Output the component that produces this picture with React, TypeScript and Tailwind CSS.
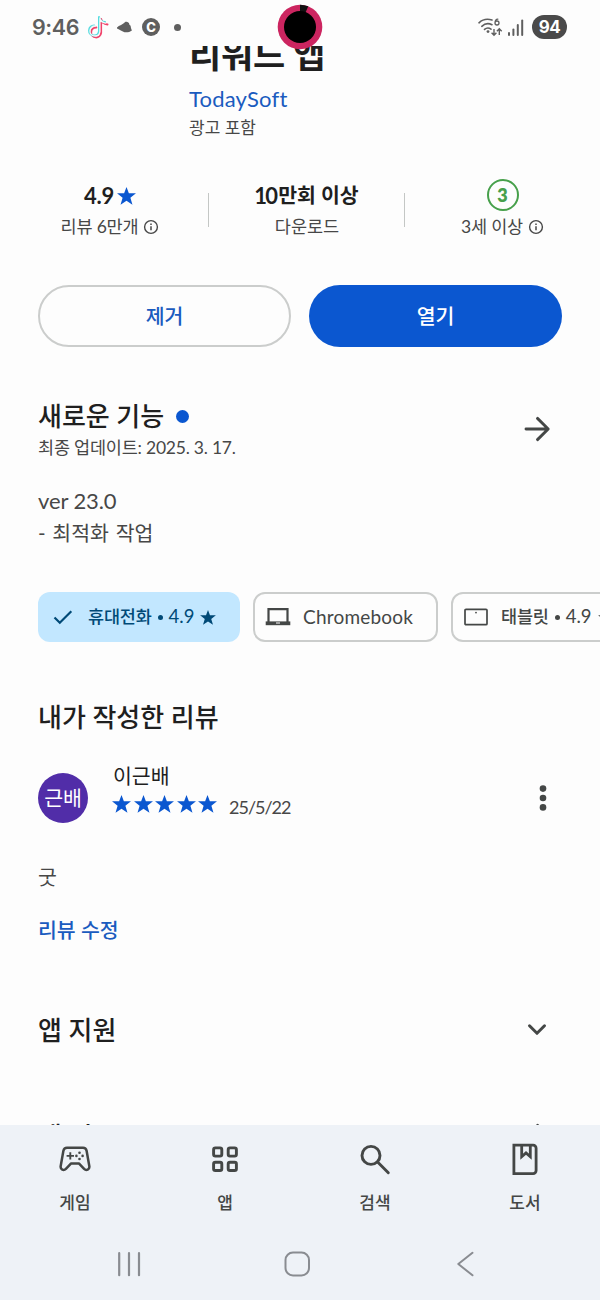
import type { ReactNode } from "react";

type IconProps = { className?: string };

function Star({ className }: IconProps) {
  return (
    <svg viewBox="0 0 20 19" className={className} fill="currentColor">
      <path d="M10 0l2.5 6.6H20l-5.900 4.700 2.200 7.400-6.300-4.200L3.700 18.700l2.200-7.400L0 6.600h7.500z" />
    </svg>
  );
}

function Info() {
  return (
    <svg viewBox="0 0 16 16" className="h-4 w-4 shrink-0" fill="none" stroke="#474747">
      <circle cx="8" cy="8" r="6.4" strokeWidth="1.4" />
      <path d="M8 7.2v4M8 4.5v1.4" strokeWidth="1.5" />
    </svg>
  );
}

function Bullet() {
  return <span className="mr-[6px] ml-[6px] h-[5px] w-[5px] shrink-0 rounded-full bg-current" />;
}

function Arrow() {
  return (
    <svg
      viewBox="0 0 28 28"
      className="h-7 w-7"
      fill="none"
      stroke="#444746"
      strokeWidth="2.9"
      strokeLinecap="round"
      strokeLinejoin="round"
    >
      <path d="M3 14h22M14.5 3.4L25.2 14 14.5 24.6" />
    </svg>
  );
}

function Chevron() {
  return (
    <svg
      viewBox="0 0 28 28"
      className="h-7 w-7"
      fill="none"
      stroke="#444746"
      strokeWidth="3"
      strokeLinecap="round"
      strokeLinejoin="round"
    >
      <path d="M6.5 9.8l7.5 7.5 7.5-7.5" />
    </svg>
  );
}

function StatusBar() {
  return (
    <header className="relative flex h-[46px] shrink-0 items-center justify-between pt-2 pr-[33px] pl-8 text-[#5f5f5f]">
      <div className="flex items-center">
        <span className="w-[48px] font-['Inter',sans-serif] text-[21.5px] leading-7 font-semibold tracking-[-0.4px] whitespace-nowrap">
          9:46
        </span>
        <svg viewBox="0 0 22 24" className="ml-[7px] h-6 w-[22px]" fill="none" strokeLinecap="round">
          <g strokeWidth="2">
            <path
              d="M13.4 3v14a5 5 0 1 1-4.8-5.6M13.4 3c.6 3 3 5 6.4 5.4"
              stroke="#f0436b"
              transform="translate(.7 1)"
            />
            <path
              d="M12.4 2.5v14a5 5 0 1 1-4.8-5.6M12.4 2.5c.6 3 3 4.6 6 5"
              stroke="#55dce0"
              transform="translate(-.4 -.4)"
            />
            <path
              d="M12.9 3v13.6a5 5 0 1 1-4.8-5.6M12.9 3.5c.8 2.6 3 4.2 6 4.6"
              stroke="#f7f7f7"
              strokeWidth="1.3"
            />
          </g>
        </svg>
        <svg viewBox="0 0 18 14" className="ml-[7px] h-3.5 w-[18px]" fill="#5f5f5f">
          <path d="M1 7.6C3 5.4 7 4.6 9.500 1.800c1.300 0 2.600.4 3.600 1.400 0 1.500.7 1.800 1.500 2.600.2 2 .6 3.200 1.300 4.600-2 1.600-5 2.300-7.400 1.800C5.500 11 3 9.400 1 8.600z" />
        </svg>
        <span className="ml-[8px] flex h-[18px] w-[18px] items-center justify-center rounded-full bg-[#5f5f5f] font-['Inter',sans-serif] text-[13px] leading-none font-extrabold text-white">
          C
        </span>
        <span className="ml-[14px] h-[7px] w-[7px] rounded-full bg-[#5f5f5f]" />
      </div>

      <div className="flex items-center">
        <svg viewBox="0 0 25 20" className="h-5 w-[25px]" fill="none" stroke="#5f5f5f">
          <g strokeWidth="1.6" strokeLinecap="round">
            <path d="M1 5.8C5 2 9.5 1.6 14 3" />
            <path d="M3.8 9.3C7 6.3 10.5 6 14 7.7" />
            <path d="M6.5 12.4c2-1.7 4.5-1.7 6.5-.2" />
          </g>
          <circle cx="10" cy="14.6" r="1.4" fill="#5f5f5f" stroke="none" />
          <path d="M20.3 2.3c-2-.5-3.3 1-3.3 3.4M21 6a2 2 0 1 1-4 0 2 2 0 0 1 4 0z" strokeWidth="1.3" />
          <path
            d="M16 12v6M13.6 15.8L16 18.2l2.4-2.4M21.3 18v-6M18.9 14.2l2.4-2.4 2.4 2.4"
            strokeWidth="1.4"
          />
        </svg>
        <svg viewBox="0 0 16 17" className="ml-[5px] h-[17px] w-4" fill="#5f5f5f">
          <rect x="0" y="13" width="2" height="4" rx="1" />
          <rect x="4.4" y="9.5" width="2" height="7.5" rx="1" />
          <rect x="8.8" y="5" width="2" height="12" rx="1" />
          <rect x="13.2" y="0.5" width="2" height="16.5" rx="1" />
        </svg>
        <span className="ml-[8px] flex h-6 w-[35px] items-center justify-center rounded-full bg-[#4a4a4a] font-['Inter',sans-serif] text-[17px] leading-none font-bold tracking-[-0.6px] text-white">
          94
        </span>
      </div>

      {/* camera cutout with charge ring */}
      <svg viewBox="0 0 46 46" className="absolute top-[4px] left-[277px] z-10 h-[46px] w-[46px]">
        <circle cx="23" cy="23" r="22.3" fill="#cc2560" />
        <path d="M23 .7a22.3 22.3 0 0 1 8.3 1.6L27 12h-4z" fill="#111" />
        <circle cx="23" cy="23" r="16" fill="#000" />
      </svg>
    </header>
  );
}

function Stats() {
  return (
    <section className="relative mt-[39px] mr-[-38px] ml-[-26px] grid grid-cols-3 text-[#474747]">
      <div className="flex flex-col items-center gap-1">
        <div className="flex h-8 items-center gap-[3px] text-[22px] font-bold tracking-[-0.2px] text-[#1f1f1f]">
          4.9
          <Star className="mt-[2px] h-[18px] w-[19px] text-[#0b57d0]" />
        </div>
        <div className="flex items-center gap-[5px] text-[17.5px] leading-6 tracking-[-0.2px]">
          리뷰 6만개
          <Info />
        </div>
      </div>
      <div className="flex flex-col items-center gap-1 pl-px">
        <div className="flex h-8 items-center text-[20.5px] font-bold text-[#1f1f1f]">
          <span className="text-[22px] tracking-[-1.8px]">10</span>
          <span className="ml-[2px]">만회 이상</span>
        </div>
        <div className="pl-px text-[17.5px] leading-6">다운로드</div>
      </div>
      <div className="flex flex-col items-center gap-1 pl-px">
        <div className="flex h-8 w-8 items-center justify-center rounded-full border-2 border-[#47a04b] text-[18px] font-extrabold text-[#47a04b]">
          3
        </div>
        <div className="flex items-center gap-[5px] text-[17.5px] leading-6 tracking-[-0.2px]">
          3세 이상
          <Info />
        </div>
      </div>
      <span className="absolute top-[14px] left-[196px] h-[34px] w-px bg-[#c4c7c5]" />
      <span className="absolute top-[14px] left-[392px] h-[34px] w-px bg-[#c4c7c5]" />
    </section>
  );
}

function DeviceChips() {
  return (
    <section className="mt-[43px] mr-[-38px] flex h-[50px] gap-[13px] overflow-hidden text-[17.5px] whitespace-nowrap text-[#444746]">
      <div className="flex w-[202px] shrink-0 items-center rounded-[12px] bg-[#c2e7ff] pl-[15px] font-medium text-[#004a77]">
        <svg viewBox="0 0 20 16" className="h-4 w-5" fill="none" stroke="currentColor" strokeWidth="2.2">
          <path d="M1.5 8.5l5.3 5.3L18.3 2.3" />
        </svg>
        <span className="ml-[15px] tracking-[-0.2px]">휴대전화</span>
        <Bullet />
        <span className="text-[18.5px] font-normal">4.9</span>
        <Star className="ml-[6px] h-[15px] w-4" />
      </div>
      <div className="flex w-[185px] shrink-0 items-center rounded-[12px] border-2 border-[#cbcdcc] pl-[10px]">
        <svg viewBox="0 0 26 20" className="h-5 w-[26px]" fill="none" stroke="#444746">
          <path d="M3.500 15V2.200h19V15" strokeWidth="2.200" />
          <path d="M.7 14.400h24.600v3.800H.7z" fill="#444746" stroke="none" />
          <path d="M11 16h4" stroke="#fff" strokeWidth="1" />
        </svg>
        <span className="ml-[12px] text-[19px] tracking-[0.2px]">Chromebook</span>
      </div>
      <div className="flex w-[204px] shrink-0 items-center rounded-[12px] border-2 border-[#cbcdcc] pl-[10px]">
        <svg viewBox="0 0 26 20" className="h-5 w-[26px]" fill="none" stroke="#444746">
          <rect x="2" y="2.3" width="22" height="15.4" rx="1" strokeWidth="1.7" />
          <circle cx="13" cy="5.6" r=".9" fill="#444746" stroke="none" />
        </svg>
        <span className="ml-[12px] font-medium tracking-[-0.2px]">태블릿</span>
        <Bullet />
        <span className="text-[18.5px]">4.9</span>
        <Star className="ml-[6px] h-[15px] w-4" />
      </div>
    </section>
  );
}

function MyReview() {
  return (
    <section className="mt-[57px]">
      <h2 className="text-[26px] leading-9 font-medium text-[#1f1f1f]">내가 작성한 리뷰</h2>
      <div className="mt-[27px] flex h-[72px] items-center">
        <div className="flex h-[50px] w-[50px] items-center justify-center rounded-full bg-[#512da8] text-[20.5px] text-white">
          근배
        </div>
        <div className="ml-[24px] h-full flex-1">
          <div className="pl-px text-[20.5px] leading-7 text-[#1f1f1f]">이근배</div>
          <div className="mt-[2px] flex h-6 items-center text-[#0b57d0]">
            <div className="flex gap-[2.5px]">
              {[1, 2, 3, 4, 5].map((n) => (
                <Star key={n} className="h-[18px] w-[19px]" />
              ))}
            </div>
            <span className="mt-[7px] ml-[12px] text-[18px] tracking-[-1px] text-[#474747]">25/5/22</span>
          </div>
        </div>
        <svg viewBox="0 0 8 28" className="mr-[15px] h-7 w-2" fill="#444746">
          <circle cx="4" cy="4.6" r="3.3" />
          <circle cx="4" cy="14" r="3.3" />
          <circle cx="4" cy="23.4" r="3.3" />
        </svg>
      </div>
      <p className="mt-[28px] text-[20.5px] leading-[30px] text-[#474747]">굿</p>
      <div className="mt-[24px] text-[20.5px] leading-7 font-medium text-[#1a5bbf]">리뷰 수정</div>
    </section>
  );
}

function SectionRow({ title, icon, className }: { title: string; icon: ReactNode; className?: string }) {
  return (
    <div className={`flex items-center justify-between pr-[11px] ${className ?? ""}`}>
      <h2 className="text-[26px] leading-9 font-medium text-[#1f1f1f]">{title}</h2>
      {icon}
    </div>
  );
}

const tabs = [
  {
    label: "게임",
    icon: (
      <>
        <path
          d="M8 4.800h16c1.900 0 3.200 1.100 3.600 2.900l2.700 15.300c.6 3.600-3 5-5.200 2.900l-5-5.300h-8.200l-5 5.300c-2.200 2.100-5.800.7-5.200-2.900L4.400 7.700C4.800 5.900 6.100 4.800 8 4.800z"
          strokeWidth="2.5"
          strokeLinejoin="round"
        />
        <path d="M11.3 9.2v7.4M7.6 12.9H15" strokeWidth="1.9" />
        <g fill="#444746" stroke="none">
          <circle cx="20.5" cy="9.8" r="1.3" />
          <circle cx="20.5" cy="16" r="1.3" />
          <circle cx="17.4" cy="12.9" r="1.3" />
          <circle cx="23.6" cy="12.9" r="1.3" />
        </g>
      </>
    ),
  },
  {
    label: "앱",
    icon: (
      <g strokeWidth="2.9">
        <rect x="4.6" y="4.9" width="8.2" height="8.2" rx="1.8" />
        <rect x="19.2" y="4.9" width="8.2" height="8.2" rx="1.8" />
        <rect x="4.6" y="19.3" width="8.2" height="8.2" rx="1.8" />
        <rect x="19.2" y="19.3" width="8.2" height="8.2" rx="1.8" />
      </g>
    ),
  },
  {
    label: "검색",
    icon: (
      <g strokeWidth="2.9" strokeLinecap="round">
        <circle cx="12" cy="12.4" r="9" />
        <path d="M18.6 19L29.3 29.7" />
      </g>
    ),
  },
  {
    label: "도서",
    icon: (
      <>
        <path d="M4.900 2.200h19.200a3 3 0 0 1 3 3v22.400a3 3 0 0 1-3 3H4.900z" strokeWidth="2.800" />
        <path d="M12.700 2v11.700l4.300-3.800 4.300 3.800V2" strokeWidth="2.800" />
      </>
    ),
  },
];

function BottomNav() {
  return (
    <footer className="h-[175px] shrink-0 bg-[#eef2f7] pt-[18px]">
      <nav className="grid grid-cols-4">
        {tabs.map((tab) => (
          <div key={tab.label} className="flex flex-col items-center">
            <svg viewBox="0 0 32 32" className="h-8 w-8" fill="none" stroke="#444746">
              {tab.icon}
            </svg>
            <span className="mt-4 text-[17px] leading-6 font-medium text-[#444746]">{tab.label}</span>
          </div>
        ))}
      </nav>
      <div className="mt-[33px] ml-[45px] grid w-[504px] grid-cols-3 justify-items-center">
        <svg viewBox="0 0 32 32" className="h-8 w-8" stroke="#898c91" strokeWidth="2.2" strokeLinecap="round">
          <path d="M6.2 5.2v22M16 5.2v22M26 5.2v22" />
        </svg>
        <svg viewBox="0 0 32 32" className="h-8 w-8" fill="none" stroke="#898c91" strokeWidth="2">
          <rect x="4.5" y="4.5" width="23.5" height="23" rx="7.5" />
        </svg>
        <svg
          viewBox="0 0 32 32"
          className="h-8 w-8"
          fill="none"
          stroke="#898c91"
          strokeWidth="2"
          strokeLinecap="round"
          strokeLinejoin="round"
        >
          <path d="M23.5 4.8L9.3 16l14.2 11.3" />
        </svg>
      </div>
    </footer>
  );
}

export default function App() {
  return (
    <div className="flex h-[1300px] w-[600px] flex-col overflow-hidden bg-[#fdfdfd] font-['Lato','Noto_Sans_CJK_KR',sans-serif]">
      <StatusBar />

      <main className="h-[1079px] shrink-0 overflow-hidden px-[38px]">
        <div className="pl-[151px]">
          <h1 className="-mt-[12px] text-[35px] leading-10 font-bold tracking-[-0.2px] text-[#1f1f1f]">리워드 앱</h1>
          <div className="mt-[11px] text-[22px] leading-7 tracking-[0.2px] text-[#1a5bbf]">TodaySoft</div>
          <div className="mt-[3px] text-[17px] leading-6 text-[#474747]">광고 포함</div>
        </div>

        <Stats />

        <div className="mt-[46px] grid grid-cols-2 gap-[18px] text-[20.5px] font-medium">
          <button className="h-[62px] rounded-full border-2 border-[#cbcdcc] text-[#1a5bbf]">제거</button>
          <button className="h-[62px] rounded-full bg-[#0b57d0] text-white">열기</button>
        </div>

        <section className="mt-[51px] text-[#474747]">
          <div className="flex items-center justify-between pr-[11px]">
            <div>
              <h2 className="flex items-center text-[26px] leading-9 font-medium text-[#1f1f1f]">
                새로운 기능
                <span className="ml-[12px] h-[13px] w-[13px] rounded-full bg-[#0b57d0]" />
              </h2>
              <div className="mt-[2px] text-[17.5px] leading-6 tracking-[-0.22px]">최종 업데이트: 2025. 3. 17.</div>
            </div>
            <Arrow />
          </div>
          <p className="mt-[25px] text-[22px] leading-8 tracking-[-0.1px]">ver 23.0</p>
          <p className="text-[20.5px] leading-8 [word-spacing:1.5px]">- 최적화 작업</p>
        </section>

        <DeviceChips />
        <MyReview />
        <SectionRow title="앱 지원" icon={<Chevron />} className="mt-[68px]" />
        <SectionRow title="앱 정보" icon={<Arrow />} className="mt-[70px]" />
      </main>

      <BottomNav />
    </div>
  );
}
